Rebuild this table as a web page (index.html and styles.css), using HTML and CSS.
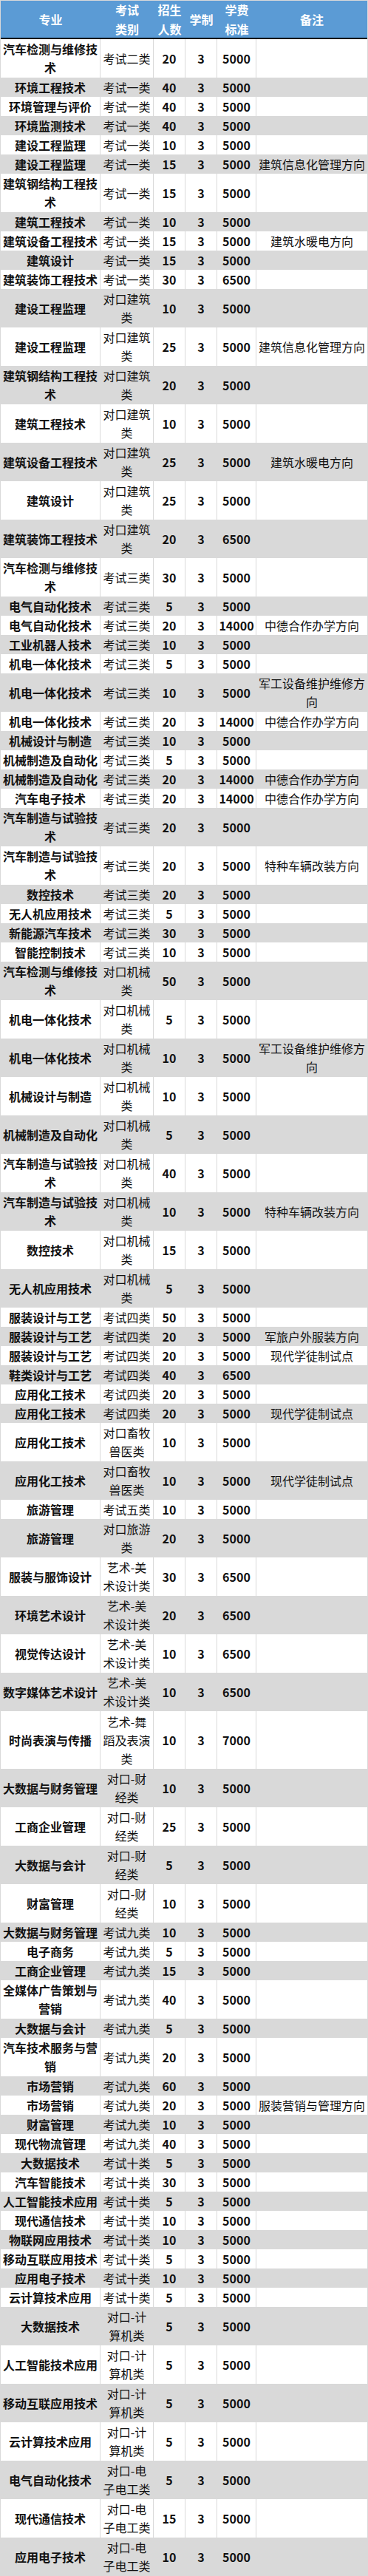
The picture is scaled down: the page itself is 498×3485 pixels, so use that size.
FILE: index.html
```html
<!DOCTYPE html>
<html lang="zh-CN">
<head>
<meta charset="utf-8">
<title>招生计划</title>
<link rel="stylesheet" href="styles.css">
</head>
<body>
<div class="sheet">
  <div class="row head">
    <div class="c">专业</div><div class="c">考试<br>类别</div><div class="c">招生<br>人数</div><div class="c">学制</div><div class="c">学费<br>标准</div><div class="c">备注</div>
  </div>
  <div class="row l2"><div class="c m">汽车检测与维修技<br>术</div><div class="c">考试二类</div><div class="c n">20</div><div class="c n">3</div><div class="c n">5000</div><div class="c"></div></div>
  <div class="row"><div class="c m">环境工程技术</div><div class="c">考试一类</div><div class="c n">40</div><div class="c n">3</div><div class="c n">5000</div><div class="c"></div></div>
  <div class="row"><div class="c m">环境管理与评价</div><div class="c">考试一类</div><div class="c n">40</div><div class="c n">3</div><div class="c n">5000</div><div class="c"></div></div>
  <div class="row"><div class="c m">环境监测技术</div><div class="c">考试一类</div><div class="c n">40</div><div class="c n">3</div><div class="c n">5000</div><div class="c"></div></div>
  <div class="row"><div class="c m">建设工程监理</div><div class="c">考试一类</div><div class="c n">10</div><div class="c n">3</div><div class="c n">5000</div><div class="c"></div></div>
  <div class="row"><div class="c m">建设工程监理</div><div class="c">考试一类</div><div class="c n">15</div><div class="c n">3</div><div class="c n">5000</div><div class="c">建筑信息化管理方向</div></div>
  <div class="row l2"><div class="c m">建筑钢结构工程技<br>术</div><div class="c">考试一类</div><div class="c n">15</div><div class="c n">3</div><div class="c n">5000</div><div class="c"></div></div>
  <div class="row"><div class="c m">建筑工程技术</div><div class="c">考试一类</div><div class="c n">10</div><div class="c n">3</div><div class="c n">5000</div><div class="c"></div></div>
  <div class="row"><div class="c m">建筑设备工程技术</div><div class="c">考试一类</div><div class="c n">15</div><div class="c n">3</div><div class="c n">5000</div><div class="c">建筑水暖电方向</div></div>
  <div class="row"><div class="c m">建筑设计</div><div class="c">考试一类</div><div class="c n">15</div><div class="c n">3</div><div class="c n">5000</div><div class="c"></div></div>
  <div class="row"><div class="c m">建筑装饰工程技术</div><div class="c">考试一类</div><div class="c n">30</div><div class="c n">3</div><div class="c n">6500</div><div class="c"></div></div>
  <div class="row l2"><div class="c m">建设工程监理</div><div class="c">对口建筑<br>类</div><div class="c n">10</div><div class="c n">3</div><div class="c n">5000</div><div class="c"></div></div>
  <div class="row l2"><div class="c m">建设工程监理</div><div class="c">对口建筑<br>类</div><div class="c n">25</div><div class="c n">3</div><div class="c n">5000</div><div class="c">建筑信息化管理方向</div></div>
  <div class="row l2"><div class="c m">建筑钢结构工程技<br>术</div><div class="c">对口建筑<br>类</div><div class="c n">20</div><div class="c n">3</div><div class="c n">5000</div><div class="c"></div></div>
  <div class="row l2"><div class="c m">建筑工程技术</div><div class="c">对口建筑<br>类</div><div class="c n">10</div><div class="c n">3</div><div class="c n">5000</div><div class="c"></div></div>
  <div class="row l2"><div class="c m">建筑设备工程技术</div><div class="c">对口建筑<br>类</div><div class="c n">25</div><div class="c n">3</div><div class="c n">5000</div><div class="c">建筑水暖电方向</div></div>
  <div class="row l2"><div class="c m">建筑设计</div><div class="c">对口建筑<br>类</div><div class="c n">25</div><div class="c n">3</div><div class="c n">5000</div><div class="c"></div></div>
  <div class="row l2"><div class="c m">建筑装饰工程技术</div><div class="c">对口建筑<br>类</div><div class="c n">20</div><div class="c n">3</div><div class="c n">6500</div><div class="c"></div></div>
  <div class="row l2"><div class="c m">汽车检测与维修技<br>术</div><div class="c">考试三类</div><div class="c n">30</div><div class="c n">3</div><div class="c n">5000</div><div class="c"></div></div>
  <div class="row"><div class="c m">电气自动化技术</div><div class="c">考试三类</div><div class="c n">5</div><div class="c n">3</div><div class="c n">5000</div><div class="c"></div></div>
  <div class="row"><div class="c m">电气自动化技术</div><div class="c">考试三类</div><div class="c n">20</div><div class="c n">3</div><div class="c n">14000</div><div class="c">中德合作办学方向</div></div>
  <div class="row"><div class="c m">工业机器人技术</div><div class="c">考试三类</div><div class="c n">10</div><div class="c n">3</div><div class="c n">5000</div><div class="c"></div></div>
  <div class="row"><div class="c m">机电一体化技术</div><div class="c">考试三类</div><div class="c n">5</div><div class="c n">3</div><div class="c n">5000</div><div class="c"></div></div>
  <div class="row l2"><div class="c m">机电一体化技术</div><div class="c">考试三类</div><div class="c n">10</div><div class="c n">3</div><div class="c n">5000</div><div class="c">军工设备维护维修方<br>向</div></div>
  <div class="row"><div class="c m">机电一体化技术</div><div class="c">考试三类</div><div class="c n">20</div><div class="c n">3</div><div class="c n">14000</div><div class="c">中德合作办学方向</div></div>
  <div class="row"><div class="c m">机械设计与制造</div><div class="c">考试三类</div><div class="c n">10</div><div class="c n">3</div><div class="c n">5000</div><div class="c"></div></div>
  <div class="row"><div class="c m">机械制造及自动化</div><div class="c">考试三类</div><div class="c n">5</div><div class="c n">3</div><div class="c n">5000</div><div class="c"></div></div>
  <div class="row"><div class="c m">机械制造及自动化</div><div class="c">考试三类</div><div class="c n">20</div><div class="c n">3</div><div class="c n">14000</div><div class="c">中德合作办学方向</div></div>
  <div class="row"><div class="c m">汽车电子技术</div><div class="c">考试三类</div><div class="c n">20</div><div class="c n">3</div><div class="c n">14000</div><div class="c">中德合作办学方向</div></div>
  <div class="row l2"><div class="c m">汽车制造与试验技<br>术</div><div class="c">考试三类</div><div class="c n">20</div><div class="c n">3</div><div class="c n">5000</div><div class="c"></div></div>
  <div class="row l2"><div class="c m">汽车制造与试验技<br>术</div><div class="c">考试三类</div><div class="c n">20</div><div class="c n">3</div><div class="c n">5000</div><div class="c">特种车辆改装方向</div></div>
  <div class="row"><div class="c m">数控技术</div><div class="c">考试三类</div><div class="c n">20</div><div class="c n">3</div><div class="c n">5000</div><div class="c"></div></div>
  <div class="row"><div class="c m">无人机应用技术</div><div class="c">考试三类</div><div class="c n">5</div><div class="c n">3</div><div class="c n">5000</div><div class="c"></div></div>
  <div class="row"><div class="c m">新能源汽车技术</div><div class="c">考试三类</div><div class="c n">30</div><div class="c n">3</div><div class="c n">5000</div><div class="c"></div></div>
  <div class="row"><div class="c m">智能控制技术</div><div class="c">考试三类</div><div class="c n">10</div><div class="c n">3</div><div class="c n">5000</div><div class="c"></div></div>
  <div class="row l2"><div class="c m">汽车检测与维修技<br>术</div><div class="c">对口机械<br>类</div><div class="c n">50</div><div class="c n">3</div><div class="c n">5000</div><div class="c"></div></div>
  <div class="row l2"><div class="c m">机电一体化技术</div><div class="c">对口机械<br>类</div><div class="c n">5</div><div class="c n">3</div><div class="c n">5000</div><div class="c"></div></div>
  <div class="row l2"><div class="c m">机电一体化技术</div><div class="c">对口机械<br>类</div><div class="c n">10</div><div class="c n">3</div><div class="c n">5000</div><div class="c">军工设备维护维修方<br>向</div></div>
  <div class="row l2"><div class="c m">机械设计与制造</div><div class="c">对口机械<br>类</div><div class="c n">10</div><div class="c n">3</div><div class="c n">5000</div><div class="c"></div></div>
  <div class="row l2"><div class="c m">机械制造及自动化</div><div class="c">对口机械<br>类</div><div class="c n">5</div><div class="c n">3</div><div class="c n">5000</div><div class="c"></div></div>
  <div class="row l2"><div class="c m">汽车制造与试验技<br>术</div><div class="c">对口机械<br>类</div><div class="c n">40</div><div class="c n">3</div><div class="c n">5000</div><div class="c"></div></div>
  <div class="row l2"><div class="c m">汽车制造与试验技<br>术</div><div class="c">对口机械<br>类</div><div class="c n">10</div><div class="c n">3</div><div class="c n">5000</div><div class="c">特种车辆改装方向</div></div>
  <div class="row l2"><div class="c m">数控技术</div><div class="c">对口机械<br>类</div><div class="c n">15</div><div class="c n">3</div><div class="c n">5000</div><div class="c"></div></div>
  <div class="row l2"><div class="c m">无人机应用技术</div><div class="c">对口机械<br>类</div><div class="c n">5</div><div class="c n">3</div><div class="c n">5000</div><div class="c"></div></div>
  <div class="row"><div class="c m">服装设计与工艺</div><div class="c">考试四类</div><div class="c n">50</div><div class="c n">3</div><div class="c n">5000</div><div class="c"></div></div>
  <div class="row"><div class="c m">服装设计与工艺</div><div class="c">考试四类</div><div class="c n">20</div><div class="c n">3</div><div class="c n">5000</div><div class="c">军旅户外服装方向</div></div>
  <div class="row"><div class="c m">服装设计与工艺</div><div class="c">考试四类</div><div class="c n">20</div><div class="c n">3</div><div class="c n">5000</div><div class="c">现代学徒制试点</div></div>
  <div class="row"><div class="c m">鞋类设计与工艺</div><div class="c">考试四类</div><div class="c n">40</div><div class="c n">3</div><div class="c n">6500</div><div class="c"></div></div>
  <div class="row"><div class="c m">应用化工技术</div><div class="c">考试四类</div><div class="c n">20</div><div class="c n">3</div><div class="c n">5000</div><div class="c"></div></div>
  <div class="row"><div class="c m">应用化工技术</div><div class="c">考试四类</div><div class="c n">20</div><div class="c n">3</div><div class="c n">5000</div><div class="c">现代学徒制试点</div></div>
  <div class="row l2"><div class="c m">应用化工技术</div><div class="c">对口畜牧<br>兽医类</div><div class="c n">10</div><div class="c n">3</div><div class="c n">5000</div><div class="c"></div></div>
  <div class="row l2"><div class="c m">应用化工技术</div><div class="c">对口畜牧<br>兽医类</div><div class="c n">10</div><div class="c n">3</div><div class="c n">5000</div><div class="c">现代学徒制试点</div></div>
  <div class="row"><div class="c m">旅游管理</div><div class="c">考试五类</div><div class="c n">10</div><div class="c n">3</div><div class="c n">5000</div><div class="c"></div></div>
  <div class="row l2"><div class="c m">旅游管理</div><div class="c">对口旅游<br>类</div><div class="c n">20</div><div class="c n">3</div><div class="c n">5000</div><div class="c"></div></div>
  <div class="row l2"><div class="c m">服装与服饰设计</div><div class="c">艺术-美<br>术设计类</div><div class="c n">30</div><div class="c n">3</div><div class="c n">6500</div><div class="c"></div></div>
  <div class="row l2"><div class="c m">环境艺术设计</div><div class="c">艺术-美<br>术设计类</div><div class="c n">20</div><div class="c n">3</div><div class="c n">6500</div><div class="c"></div></div>
  <div class="row l2"><div class="c m">视觉传达设计</div><div class="c">艺术-美<br>术设计类</div><div class="c n">10</div><div class="c n">3</div><div class="c n">6500</div><div class="c"></div></div>
  <div class="row l2"><div class="c m">数字媒体艺术设计</div><div class="c">艺术-美<br>术设计类</div><div class="c n">10</div><div class="c n">3</div><div class="c n">6500</div><div class="c"></div></div>
  <div class="row l3"><div class="c m">时尚表演与传播</div><div class="c">艺术-舞<br>蹈及表演<br>类</div><div class="c n">10</div><div class="c n">3</div><div class="c n">7000</div><div class="c"></div></div>
  <div class="row l2"><div class="c m">大数据与财务管理</div><div class="c">对口-财<br>经类</div><div class="c n">10</div><div class="c n">3</div><div class="c n">5000</div><div class="c"></div></div>
  <div class="row l2"><div class="c m">工商企业管理</div><div class="c">对口-财<br>经类</div><div class="c n">25</div><div class="c n">3</div><div class="c n">5000</div><div class="c"></div></div>
  <div class="row l2"><div class="c m">大数据与会计</div><div class="c">对口-财<br>经类</div><div class="c n">5</div><div class="c n">3</div><div class="c n">5000</div><div class="c"></div></div>
  <div class="row l2"><div class="c m">财富管理</div><div class="c">对口-财<br>经类</div><div class="c n">10</div><div class="c n">3</div><div class="c n">5000</div><div class="c"></div></div>
  <div class="row"><div class="c m">大数据与财务管理</div><div class="c">考试九类</div><div class="c n">10</div><div class="c n">3</div><div class="c n">5000</div><div class="c"></div></div>
  <div class="row"><div class="c m">电子商务</div><div class="c">考试九类</div><div class="c n">5</div><div class="c n">3</div><div class="c n">5000</div><div class="c"></div></div>
  <div class="row"><div class="c m">工商企业管理</div><div class="c">考试九类</div><div class="c n">15</div><div class="c n">3</div><div class="c n">5000</div><div class="c"></div></div>
  <div class="row l2"><div class="c m">全媒体广告策划与<br>营销</div><div class="c">考试九类</div><div class="c n">40</div><div class="c n">3</div><div class="c n">5000</div><div class="c"></div></div>
  <div class="row"><div class="c m">大数据与会计</div><div class="c">考试九类</div><div class="c n">5</div><div class="c n">3</div><div class="c n">5000</div><div class="c"></div></div>
  <div class="row l2"><div class="c m">汽车技术服务与营<br>销</div><div class="c">考试九类</div><div class="c n">20</div><div class="c n">3</div><div class="c n">5000</div><div class="c"></div></div>
  <div class="row"><div class="c m">市场营销</div><div class="c">考试九类</div><div class="c n">60</div><div class="c n">3</div><div class="c n">5000</div><div class="c"></div></div>
  <div class="row"><div class="c m">市场营销</div><div class="c">考试九类</div><div class="c n">20</div><div class="c n">3</div><div class="c n">5000</div><div class="c">服装营销与管理方向</div></div>
  <div class="row"><div class="c m">财富管理</div><div class="c">考试九类</div><div class="c n">10</div><div class="c n">3</div><div class="c n">5000</div><div class="c"></div></div>
  <div class="row"><div class="c m">现代物流管理</div><div class="c">考试九类</div><div class="c n">40</div><div class="c n">3</div><div class="c n">5000</div><div class="c"></div></div>
  <div class="row"><div class="c m">大数据技术</div><div class="c">考试十类</div><div class="c n">5</div><div class="c n">3</div><div class="c n">5000</div><div class="c"></div></div>
  <div class="row"><div class="c m">汽车智能技术</div><div class="c">考试十类</div><div class="c n">30</div><div class="c n">3</div><div class="c n">5000</div><div class="c"></div></div>
  <div class="row"><div class="c m">人工智能技术应用</div><div class="c">考试十类</div><div class="c n">5</div><div class="c n">3</div><div class="c n">5000</div><div class="c"></div></div>
  <div class="row"><div class="c m">现代通信技术</div><div class="c">考试十类</div><div class="c n">10</div><div class="c n">3</div><div class="c n">5000</div><div class="c"></div></div>
  <div class="row"><div class="c m">物联网应用技术</div><div class="c">考试十类</div><div class="c n">10</div><div class="c n">3</div><div class="c n">5000</div><div class="c"></div></div>
  <div class="row"><div class="c m">移动互联应用技术</div><div class="c">考试十类</div><div class="c n">5</div><div class="c n">3</div><div class="c n">5000</div><div class="c"></div></div>
  <div class="row"><div class="c m">应用电子技术</div><div class="c">考试十类</div><div class="c n">10</div><div class="c n">3</div><div class="c n">5000</div><div class="c"></div></div>
  <div class="row"><div class="c m">云计算技术应用</div><div class="c">考试十类</div><div class="c n">5</div><div class="c n">3</div><div class="c n">5000</div><div class="c"></div></div>
  <div class="row l2"><div class="c m">大数据技术</div><div class="c">对口-计<br>算机类</div><div class="c n">5</div><div class="c n">3</div><div class="c n">5000</div><div class="c"></div></div>
  <div class="row l2"><div class="c m">人工智能技术应用</div><div class="c">对口-计<br>算机类</div><div class="c n">5</div><div class="c n">3</div><div class="c n">5000</div><div class="c"></div></div>
  <div class="row l2"><div class="c m">移动互联应用技术</div><div class="c">对口-计<br>算机类</div><div class="c n">5</div><div class="c n">3</div><div class="c n">5000</div><div class="c"></div></div>
  <div class="row l2"><div class="c m">云计算技术应用</div><div class="c">对口-计<br>算机类</div><div class="c n">5</div><div class="c n">3</div><div class="c n">5000</div><div class="c"></div></div>
  <div class="row l2"><div class="c m">电气自动化技术</div><div class="c">对口-电<br>子电工类</div><div class="c n">5</div><div class="c n">3</div><div class="c n">5000</div><div class="c"></div></div>
  <div class="row l2"><div class="c m">现代通信技术</div><div class="c">对口-电<br>子电工类</div><div class="c n">15</div><div class="c n">3</div><div class="c n">5000</div><div class="c"></div></div>
  <div class="row l2"><div class="c m">应用电子技术</div><div class="c">对口-电<br>子电工类</div><div class="c n">10</div><div class="c n">3</div><div class="c n">5000</div><div class="c"></div></div>
</div>
</body>
</html>
```
FILE: styles.css
```css
html, body {
  margin: 0;
  padding: 0;
  background: #ffffff;
}

body {
  font-family: "Noto Sans CJK SC", "Noto Sans", sans-serif;
  font-size: 16px;
  color: #111111;
}

.sheet {
  width: 498px;
  box-sizing: border-box;
  border-top: 1px solid #d9d9d9;
  border-left: 1px solid #d9d9d9;
  border-right: 1px solid #d9d9d9;
}

.row {
  display: grid;
  grid-template-columns: 135px 72px 43px 43px 53px 1fr;
  height: 26px;
  box-sizing: border-box;
  background: #ffffff;
}

.row:nth-child(odd) {
  background: #d9d9d9;
}

.row.l2 {
  height: 52px;
}

.row.l3 {
  height: 78px;
}

.c {
  display: flex;
  align-items: center;
  justify-content: center;
  text-align: center;
  white-space: nowrap;
  line-height: 25px;
  border-right: 1px solid #d9d9d9;
  box-sizing: border-box;
  overflow: hidden;
}

.c:last-child {
  border-right: 0;
}

.m,
.n {
  font-weight: bold;
}

.row.head {
  height: 52px;
  background: #5b9bd5;
  color: #ffffff;
  font-weight: bold;
  border-bottom: 2px solid #000000;
}

.row.head .c {
  border-right: 0;
  line-height: 26px;
}
```
